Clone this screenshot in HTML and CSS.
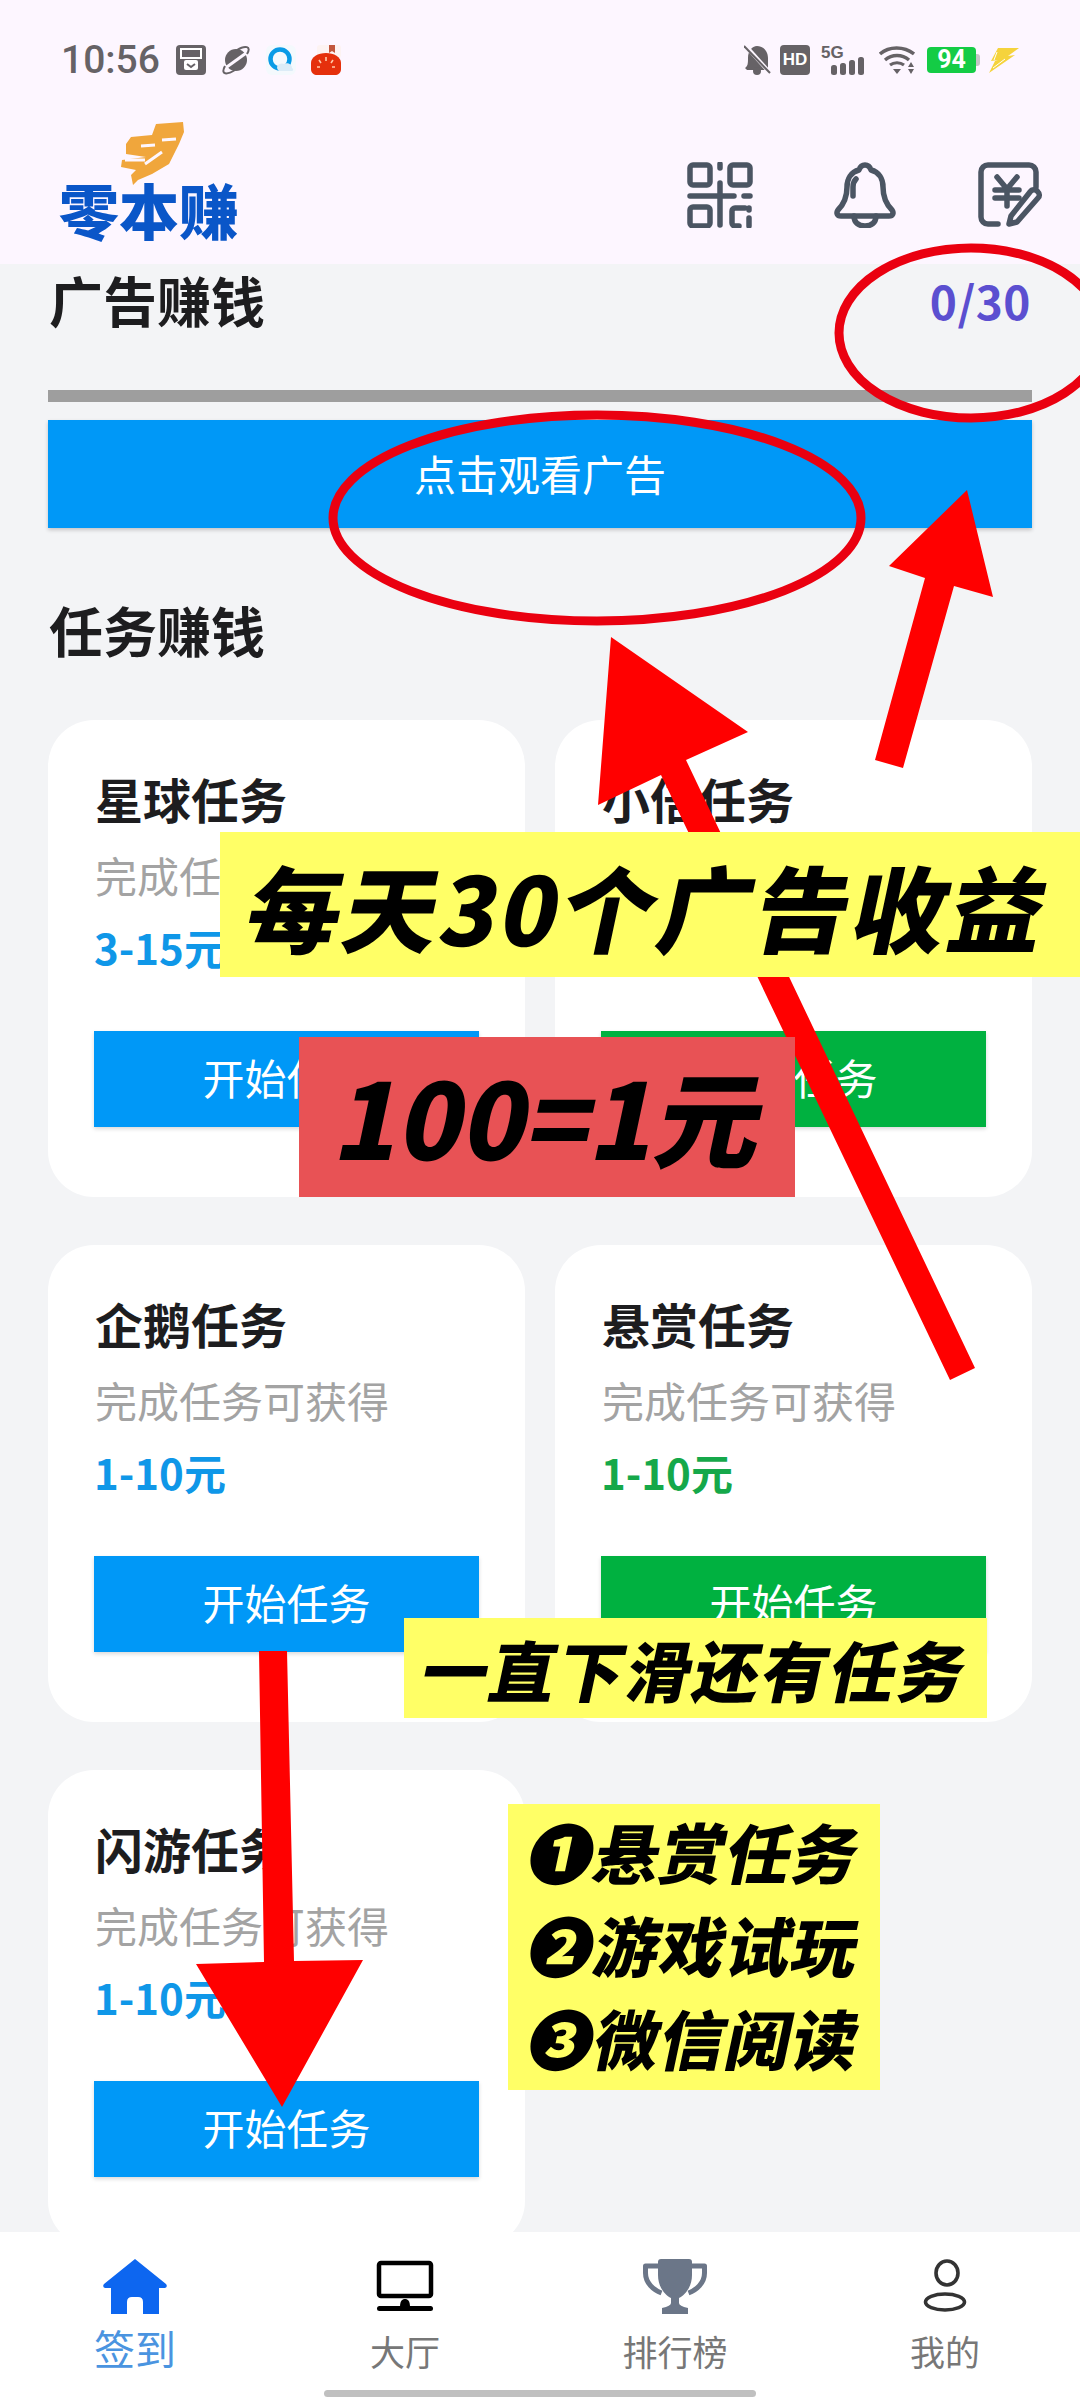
FILE: index.html
```html
<!DOCTYPE html>
<html lang="zh-CN">
<head>
  <meta charset="UTF-8">
  <meta name="viewport" content="width=device-width, initial-scale=1.0">
  <title>零本赚</title>
  <link rel="stylesheet" href="styles.css">
</head>
<body>
  <div class="page">
    <div class="header">
      <div class="status">
        <div class="status-left">
          <span class="time">10:56</span>
          <svg class="si" viewBox="0 0 30 30"><rect width="30" height="30" rx="4" fill="#666266"/><rect x="5" y="4" width="20" height="9" fill="none" stroke="#fff" stroke-width="2"/><rect x="8" y="15" width="14" height="10" rx="2" fill="#fff"/><path d="M11 19l4 3 4-3" fill="none" stroke="#666266" stroke-width="2"/></svg>
          <svg class="si" viewBox="0 0 30 30"><ellipse cx="15" cy="15" rx="11" ry="11" fill="#666266"/><path d="M3 24L28 6" stroke="#fdf6ff" stroke-width="3"/><path d="M4 21C-1 30 6 30 14 25M26 9c5-8-2-9-10-4" fill="none" stroke="#666266" stroke-width="2"/></svg>
          <svg class="si" viewBox="0 0 30 30"><rect width="30" height="30" rx="6" fill="#f4f9fd"/><circle cx="14" cy="14" r="9.5" fill="none" stroke="#0a9be6" stroke-width="4.5"/><path d="M12 25c-3-4 2-8 6-6 3-2 8 0 8 4 2 1 1 3 0 3H13z" fill="#dcecf7"/></svg>
          <svg class="si" viewBox="0 0 30 30"><rect x="6" y="0" width="24" height="13" rx="3" fill="#fdf3f2"/><path d="M18 0h6v8l-3-2-3 2z" fill="#c2573d"/><path d="M0 18C0 12 7 8 15 8s15 4 15 10v6c0 4-3 6-6 6H6c-3 0-6-2-6-6z" fill="#e5300c"/><path d="M15 12v4M8 15l2 3M22 15l-2 3M6 22h3M21 22h3" stroke="#ffc9a8" stroke-width="1.6"/></svg>
        </div>
        <div class="status-right">
          <svg class="st-bell" viewBox="0 0 27 30"><path d="M13 1c6 0 11 5 11 12v12H3l-2-2c3-2 3-5 3-10C4 6 8 1 13 1z" fill="#666266"/><circle cx="13" cy="26" r="4" fill="#666266"/><path d="M1 0l25 28" stroke="#fdf6ff" stroke-width="4"/><path d="M0 1l26 27" stroke="#666266" stroke-width="2"/></svg>
          <span class="st-hd">HD</span>
          <svg class="st-sig" viewBox="0 -4 44 34"><text x="0" y="13" class="st-5g">5G</text><rect x="10" y="20" width="6" height="10" rx="2.5" fill="#666266"/><rect x="19" y="18" width="6" height="12" rx="2.5" fill="#666266"/><rect x="28" y="15" width="6" height="15" rx="2.5" fill="#666266"/><rect x="37" y="12" width="6" height="18" rx="2.5" fill="#666266"/></svg>
          <svg class="st-wifi" viewBox="0 0 36 30"><path d="M1 9c9-8 24-8 34 0" fill="none" stroke="#666266" stroke-width="3.4"/><path d="M6 15c7-6 17-6 24 0" fill="none" stroke="#666266" stroke-width="3.4"/><path d="M11 20c4-3 10-3 14 0" fill="none" stroke="#666266" stroke-width="3.2"/><path d="M14 24h8l-4 5z" fill="#666266"/><path d="M32 17l3 5h-6zM29 24h6l-3 5z" fill="#666266"/></svg>
          <div class="st-batt"><span class="st-level">94</span><span class="st-cap"></span></div>
          <svg class="st-bolt" viewBox="0 0 30 25"><path d="M9 0h21L19 8l7-1L0 25l6-12 3-1-7 1z" fill="#f5d33c"/><path d="M8 4l-3 8M4 20l12-9" stroke="#fff" stroke-width="1"/></svg>
        </div>
      </div>
      <div class="appbar">
        <div class="logo">
          <svg class="logo-mark" viewBox="0 0 64 64"><path d="M36 2L63 0l1 10-5 12-3 6-7 14-17 10-14 6-5 5-2-10 5-5-15-3 1-7 24-3-20-3V22l5-7 21-2z" fill="#f0a63c"/><path d="M21 24l14-1M42 18l14-1M25 42l17-12M5 38h20" fill="none" stroke="#fdf6ff" stroke-width="3"/></svg>
          <div class="logo-text">零本赚</div>
        </div>
        <div class="app-icons">
          <svg class="ai" viewBox="0 0 66 66"><g fill="none" stroke="#4b5563" stroke-width="5.5" stroke-linecap="round" stroke-linejoin="round"><rect x="3" y="3" width="20" height="20" rx="3"/><rect x="43" y="3" width="20" height="20" rx="3"/><rect x="3" y="45" width="20" height="19" rx="3"/><path d="M33 2v4M33 21v42M3 34h44M57 34h6M58 46h-10a3 3 0 0 0-3 3v12a3 3 0 0 0 3 3h4M62 56v8"/><path d="M62 46v2"/></g></svg>
          <svg class="ai" viewBox="0 0 66 66"><g fill="none" stroke="#4b5563" stroke-width="5.5" stroke-linecap="round" stroke-linejoin="round"><path d="M33 3c3 0 5 2 6 5 8 2 12 9 12 17 0 9 2 16 9 23 2 3 1 6-3 6H9c-4 0-5-3-3-6 7-7 9-14 9-23 0-8 4-15 12-17 1-3 3-5 6-5z"/><path d="M22 54c0 7 5 10 11 10s11-3 11-10"/><path d="M21 34v-9c0-3 1-6 3-8"/></g></svg>
          <svg class="ai" viewBox="0 0 66 66"><g fill="none" stroke="#4b5563" stroke-width="5.5" stroke-linecap="round" stroke-linejoin="round"><path d="M21 62H11a7 7 0 0 1-7-7V10a7 7 0 0 1 7-7h41a7 7 0 0 1 7 7v15"/><path d="M20 15l10 12 10-12M30 27v17M18 28h24M18 36h24"/><path d="M53 30l-19 24-2 8 8-2 21-24a4 4 0 0 0 0-6c-2-3-6-3-8 0z"/></g></svg>
        </div>
      </div>
    </div>

    <div class="main">
      <div class="section-head">
        <span class="section-title">广告赚钱</span>
        <span class="count">0/30</span>
      </div>
      <div class="progress"></div>
      <div class="ad-btn">点击观看广告</div>
      <div class="section-title task-title">任务赚钱</div>
      <div class="task-grid">
        <div class="card blue">
          <div class="card-title">星球任务</div>
          <div class="card-sub">完成任务可获得</div>
          <div class="card-price">3-15元</div>
          <div class="card-btn">开始任务</div>
        </div>
        <div class="card green">
          <div class="card-title">小倍任务</div>
          <div class="card-sub">完成任务可获得</div>
          <div class="card-price">1-10元</div>
          <div class="card-btn">开始任务</div>
        </div>
        <div class="card blue">
          <div class="card-title">企鹅任务</div>
          <div class="card-sub">完成任务可获得</div>
          <div class="card-price">1-10元</div>
          <div class="card-btn">开始任务</div>
        </div>
        <div class="card green">
          <div class="card-title">悬赏任务</div>
          <div class="card-sub">完成任务可获得</div>
          <div class="card-price">1-10元</div>
          <div class="card-btn">开始任务</div>
        </div>
        <div class="card blue">
          <div class="card-title">闪游任务</div>
          <div class="card-sub">完成任务可获得</div>
          <div class="card-price">1-10元</div>
          <div class="card-btn">开始任务</div>
        </div>
      </div>
    </div>

    <div class="tabbar">
      <div class="tabs">
        <div class="tab active">
          <svg class="tab-icon" viewBox="0 0 66 56"><path d="M33 1L64 26q2 3-1 4h-6V56H41V44q0-5-5-5h-6q-5 0-5 5V56H9V30H3q-3-1-1-4z" fill="#0d66f0"/></svg>
          <span class="tab-label">签到</span>
        </div>
        <div class="tab">
          <svg class="tab-icon" viewBox="0 0 66 56"><rect x="7" y="5" width="52" height="33" rx="2" fill="none" stroke="#000" stroke-width="4.5"/><path d="M28 49c0-6 2-8 5-8s5 2 5 8z" fill="#000"/><rect x="5" y="48" width="56" height="5" rx="2.5" fill="#000"/></svg>
          <span class="tab-label">大厅</span>
        </div>
        <div class="tab">
          <svg class="tab-icon" viewBox="0 0 66 56"><path d="M16 8H3.500v7c0 10 8 17 16 20M50 8h12.500v7c0 10-8 17-16 20" fill="none" stroke="#6b7688" stroke-width="5" stroke-linejoin="round"/><path d="M19 1h28q3 0 3 3v13c0 12-7 20-13 23v5q0 3 9 5v6H20v-6q9-2 9-5v-5C23 37 16 29 16 17V4q0-3 3-3z" fill="#6b7688"/></svg>
          <span class="tab-label">排行榜</span>
        </div>
        <div class="tab">
          <svg class="tab-icon" viewBox="0 0 66 56"><ellipse cx="35" cy="15" rx="11" ry="12" fill="none" stroke="#333" stroke-width="3.600"/><ellipse cx="33" cy="44" rx="19.500" ry="8" fill="none" stroke="#333" stroke-width="3.600"/></svg>
          <span class="tab-label">我的</span>
        </div>
      </div>
      <div class="home-bar"></div>
    </div>

    <svg class="marks" viewBox="0 0 1080 2400">
      <polygon class="arrow" points="967,490 993,597 954,586 903,768 875,760 925,578 889,566"/>
      <polygon class="arrow" points="611,637 748,732 686,760 975,1368 950,1380 661,775 598,805"/>
      <polygon class="arrow" points="259,1651 287,1651 294,1961 363,1960 282,2107 196,1964 264,1962"/>
      <ellipse class="ring" cx="597" cy="518" rx="264" ry="103"/>
      <ellipse class="ring" cx="971" cy="333" rx="132" ry="85"/>
    </svg>

    <div class="note note-daily"><span class="slant">每天30个广告收益</span></div>
    <div class="note note-rate"><span class="slant">100=1元</span></div>
    <div class="note note-more"><span class="slant">一直下滑还有任务</span></div>
    <div class="note note-list">
      <span class="slant">❶悬赏任务</span>
      <span class="slant">❷游戏试玩</span>
      <span class="slant">❸微信阅读</span>
    </div>
  </div>
</body>
</html>
```

FILE: styles.css
```css
html, body {
  margin: 0;
  padding: 0;
  font-family: "Noto Sans CJK SC", "Noto Sans", sans-serif;
}
.page {
  position: relative;
  width: 1080px;
  height: 2400px;
  overflow: hidden;
  display: flex;
  flex-direction: column;
  background: #f3f4f6;
}

/* header */
.header {
  height: 264px;
  flex: none;
  background: #fdf6ff;
}
.status {
  display: flex;
  justify-content: space-between;
  padding: 36px 61px 0;
  height: 48px;
}
.status-left, .status-right {
  display: flex;
  align-items: center;
}
.time {
  font-family: Roboto, sans-serif;
  font-size: 39px;
  line-height: 48px;
  font-weight: 500;
  color: #666266;
  margin-right: 16px;
}
.si {
  width: 30px;
  height: 30px;
  margin-right: 15px;
}
.st-bell {
  width: 27px;
  height: 30px;
  margin-right: 9px;
}
.st-hd {
  width: 30px;
  height: 30px;
  border-radius: 4px;
  background: #666266;
  color: #fff;
  font-family: "Liberation Sans", sans-serif;
  font-size: 17px;
  font-weight: 700;
  line-height: 30px;
  text-align: center;
  margin-right: 11px;
}
.st-sig {
  width: 44px;
  height: 34px;
  margin: 0 14px 4px 0;
}
.st-5g {
  font-family: "Liberation Sans", sans-serif;
  font-size: 17px;
  font-weight: 700;
  fill: #666266;
}
.st-wifi {
  width: 36px;
  height: 30px;
  margin-right: 12px;
}
.st-batt {
  display: flex;
  align-items: center;
  margin-right: 9px;
}
.st-level {
  width: 49px;
  height: 26px;
  border-radius: 4px;
  background: #14cc45;
  color: #fff;
  font-family: Roboto, sans-serif;
  font-size: 25px;
  font-weight: 700;
  line-height: 26px;
  text-align: center;
}
.st-cap {
  width: 4px;
  height: 12px;
  background: #c5c5c5;
  border-radius: 0 3px 3px 0;
}
.st-bolt {
  width: 30px;
  height: 25px;
}
.appbar {
  display: flex;
  justify-content: space-between;
  align-items: flex-end;
  padding: 38px 37px 0 59px;
}
.logo {
  display: flex;
  flex-direction: column;
  width: 181px;
}
.logo-mark {
  width: 64px;
  height: 64px;
  margin-left: 61px;
  position: relative;
  z-index: 1;
}
.logo-text {
  font-size: 60px;
  font-weight: 900;
  line-height: 70px;
  margin: -12px 0 -6px;
  color: #0a56c8;
  white-space: nowrap;
}
.app-icons {
  display: flex;
  gap: 79px;
  margin-bottom: 10px;
}
.ai {
  width: 66px;
  height: 66px;
}

/* main content, the last card runs on under the tab bar */
.main {
  flex: 1;
  min-height: 0;
  padding: 4px 48px 0;
}
.section-head {
  display: flex;
  justify-content: space-between;
  align-items: center;
  padding-right: 1px;
}
.section-title {
  font-size: 54px;
  font-weight: 700;
  line-height: 64px;
  margin-left: 1px;
  color: #1d1d1f;
}
.count {
  font-size: 46px;
  font-weight: 700;
  line-height: 64px;
  letter-spacing: 0.5px;
  color: #5b4fd0;
}
.progress {
  height: 12px;
  margin-top: 58px;
  background: #9e9e9e;
}
.ad-btn {
  height: 108px;
  margin-top: 18px;
  background: #0098f7;
  color: #fff;
  font-size: 42px;
  line-height: 106px;
  text-align: center;
  box-shadow: 0 2px 4px rgba(0, 0, 0, 0.2);
}
.task-title {
  margin-top: 70px;
}
.task-grid {
  display: grid;
  grid-template-columns: 1fr 1fr;
  column-gap: 30px;
  row-gap: 48px;
  margin-top: 58px;
}
.card {
  height: 434px;
  padding: 43px 46px 0;
  background: #fff;
  border-radius: 46px;
}
.card-title {
  font-size: 48px;
  font-weight: 700;
  line-height: 70px;
  margin-left: 1px;
  color: #1d1d1f;
}
.card-sub {
  font-size: 42px;
  line-height: 56px;
  margin: 14px 0 0 1px;
  color: #a3a3a3;
}
.card-price {
  font-size: 42px;
  font-weight: 700;
  line-height: 56px;
  margin-top: 16px;
}
.card-btn {
  height: 96px;
  margin-top: 56px;
  color: #fff;
  font-size: 42px;
  line-height: 92px;
  text-align: center;
  box-shadow: 0 2px 4px rgba(0, 0, 0, 0.15);
}
.blue .card-price { color: #0f97e8; }
.blue .card-btn { background: #0098f7; }
.green .card-price { color: #15a84a; }
.green .card-btn { background: #00b140; }

/* bottom tabs */
.tabbar {
  flex: none;
  height: 168px;
  background: #fff;
  position: relative;
  display: flex;
  flex-direction: column;
  align-items: center;
}
.tabs {
  display: grid;
  grid-template-columns: repeat(4, 1fr);
  width: 100%;
  padding-top: 26px;
}
.tab {
  display: flex;
  flex-direction: column;
  align-items: center;
}
.tab-icon {
  height: 56px;
  width: 66px;
}
.tab-label {
  font-size: 35px;
  line-height: 40px;
  margin-top: 17px;
  color: #777;
}
.active .tab-label {
  font-size: 41px;
  margin-top: 13px;
  margin-bottom: 4px;
  color: #4a94e0;
}
.home-bar {
  width: 432px;
  height: 7px;
  margin-top: 19px;
  border-radius: 4px;
  background: #c0c0c0;
}

/* annotations painted over the screenshot */
.marks {
  position: absolute;
  top: 0;
  left: 0;
  width: 1080px;
  height: 2400px;
}
.arrow {
  fill: #ff0000;
}
.ring {
  fill: none;
  stroke: #ea0010;
  stroke-width: 9;
}
.note {
  position: absolute;
  color: #000;
  font-weight: 900;
  display: flex;
  flex-direction: column;
  align-items: center;
  justify-content: center;
  white-space: nowrap;
}
.slant {
  display: block;
  transform: skewX(-12deg);
}
.note-daily {
  left: 220px;
  top: 832px;
  width: 860px;
  height: 145px;
  background: #ffff66;
  font-size: 94px;
  letter-spacing: 3px;
}
.note-rate {
  left: 299px;
  top: 1037px;
  width: 484px;
  height: 154px;
  padding: 0 0 6px 12px;
  background: #e85255;
  font-size: 105px;
}
.note-more {
  left: 404px;
  top: 1618px;
  width: 583px;
  height: 100px;
  background: #ffff66;
  font-size: 66px;
  letter-spacing: 2px;
}
.note-list {
  left: 508px;
  top: 1804px;
  width: 372px;
  height: 281px;
  padding-top: 5px;
  background: #ffff66;
  font-family: "DejaVu Serif", "Noto Sans CJK SC", sans-serif;
  font-size: 65px;
  line-height: 93px;
  letter-spacing: 1px;
}
```
